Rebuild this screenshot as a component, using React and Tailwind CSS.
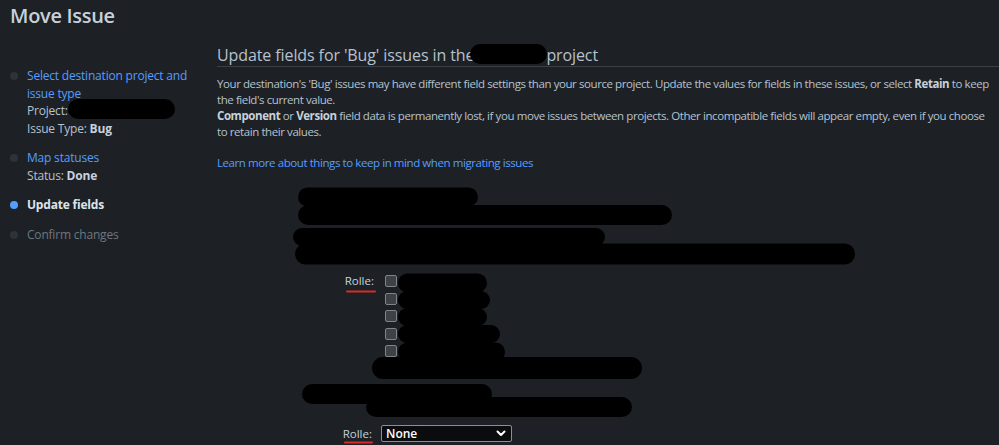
import React from "react";

const blobs = [
  // [x1, x2, cy, h]
  [68, 175, 109, 20],
  [470, 547, 54, 20],
  [298, 478, 197, 19],
  [298, 672, 215, 20],
  [293, 605, 237, 18],
  [295, 855, 254, 21],
  [398, 487, 283, 19],
  [398, 490, 300, 18],
  [398, 487, 317, 18],
  [398, 500, 334, 18],
  [398, 505, 352, 19],
  [372, 642, 368, 22],
  [302, 492, 394, 20],
  [366, 632, 407, 20],
];

function Overlay() {
  return (
    <svg
      className="absolute inset-0 pointer-events-none"
      width="999"
      height="445"
      viewBox="0 0 999 445"
    >
      {blobs.map(([x1, x2, cy, h], i) => (
        <line
          key={i}
          x1={x1 + h / 2}
          x2={x2 - h / 2}
          y1={cy}
          y2={cy}
          stroke="#000"
          strokeWidth={h}
          strokeLinecap="round"
        />
      ))}
      <line x1="347" x2="375" y1="291.5" y2="291.5" stroke="#d92b2b" strokeWidth="2" strokeLinecap="round" />
      <line x1="345" x2="372" y1="442.5" y2="442.5" stroke="#d92b2b" strokeWidth="2" strokeLinecap="round" />
    </svg>
  );
}

function Step({ dot, children, gap }) {
  return (
    <div className={`flex ${gap}`}>
      <div className="w-[27px] shrink-0 pt-[5px] pl-[10px]">
        <div className={`w-[8px] h-[8px] rounded-full ${dot}`} />
      </div>
      <div className="flex-1">{children}</div>
    </div>
  );
}

function Checkbox() {
  return (
    <div className="w-[12px] h-[12px] rounded-[2px] bg-[#3e4146] border border-[#80858a]" />
  );
}

export default function App() {
  return (
    <div
      className="relative w-[999px] h-[445px] overflow-hidden bg-[#1d2125] text-[#b6c2cf]"
      style={{ fontFamily: '"Open Sans", "Noto Sans", sans-serif' }}
    >
      <h1 className="pl-[10px] pt-[1px] text-[20px] leading-[30px] tracking-[-0.3px] font-semibold text-[#c7d1db]">
        Move Issue
      </h1>
      <div className="flex">
        <div className="w-[217px] shrink-0 pt-[36px] text-[12px] leading-[17.5px] tracking-[-0.2px]">
          <Step dot="bg-[#2c333a]" gap="mb-[12px]">
            <div className="text-[#579dff] whitespace-nowrap">
              Select destination project and
              <br />
              issue type
            </div>
            <div>Project:</div>
            <div>
              Issue Type: <span className="font-bold text-[#c7d1db]">Bug</span>
            </div>
          </Step>
          <Step dot="bg-[#2c333a]" gap="mb-[12px]">
            <div className="text-[#579dff]">Map statuses</div>
            <div>
              Status: <span className="font-bold text-[#c7d1db]">Done</span>
            </div>
          </Step>
          <Step dot="bg-[#579dff]" gap="mb-[12px]">
            <div className="font-bold text-[#dee4ea]">Update fields</div>
          </Step>
          <Step dot="bg-[#2c333a]" gap="">
            <div className="text-[#6e7781]">Confirm changes</div>
          </Step>
        </div>
        <div className="flex-1 pt-[13px]">
          <h2 className="text-[16px] leading-[22px] tracking-[-0.1px] font-medium text-[#b6c2cf] border-b border-[#3b4046] whitespace-nowrap">
            Update fields for 'Bug' issues in the
            <span className="inline-block w-[72px]" />
            project
          </h2>
          <p className="mt-[9px] text-[11.5px] leading-[16px] tracking-[-0.42px] text-[#b6c2cf] whitespace-nowrap">
            Your destination's 'Bug' issues may have different field settings than your source project. Update the values for fields in these issues, or select <b className="text-[#c7d1db]">Retain</b> to keep
            <br />
            the field's current value.
            <br />
            <b className="text-[#c7d1db]">Component</b> or <b className="text-[#c7d1db]">Version</b> field data is permanently lost, if you move issues between projects. Other incompatible fields will appear empty, even if you choose
            <br />
            to retain their values.
          </p>
          <div className="mt-[15px] text-[11.5px] leading-[16px] tracking-[-0.42px] text-[#579dff]">
            Learn more about things to keep in mind when migrating issues
          </div>
          <div className="h-[102px]" />
          <div className="flex text-[11.5px] text-[#c7d1db]">
            <div className="w-[157px] shrink-0 text-right mr-[11px] leading-[16px]">Rolle:</div>
            <div className="flex flex-col gap-[5.5px] pt-[2px]">
              <Checkbox />
              <Checkbox />
              <Checkbox />
              <Checkbox />
              <Checkbox />
            </div>
          </div>
          <div className="h-[68px]" />
          <div className="flex items-center text-[11.5px] text-[#c7d1db]">
            <div className="w-[155px] shrink-0 text-right mr-[9px] leading-[16px]">Rolle:</div>
            <div className="w-[131px] h-[17px] bg-[#0b0c0d] border border-[#8c8f93] rounded-[2px] flex items-center justify-between pl-[4px] pr-[5px]">
              <span className="text-white font-semibold text-[12px] leading-[15px]">None</span>
              <svg width="10" height="7" viewBox="0 0 10 7">
                <path d="M1.5 1.5 L5 5 L8.5 1.5" fill="none" stroke="#fff" strokeWidth="2" strokeLinecap="round" strokeLinejoin="round" />
              </svg>
            </div>
          </div>
        </div>
      </div>
      <Overlay />
    </div>
  );
}
